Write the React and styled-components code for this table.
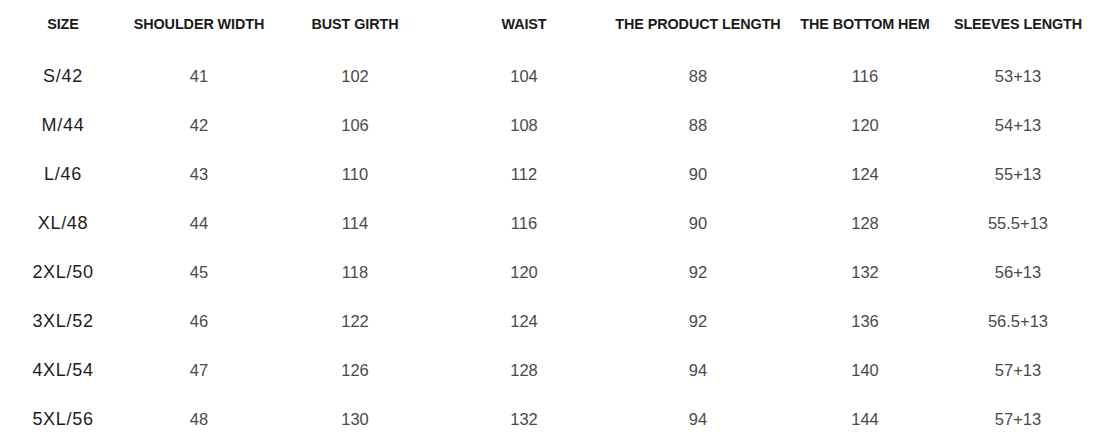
import React from "react";
import styled, { createGlobalStyle } from "styled-components";

const columns = [
  "SIZE",
  "SHOULDER WIDTH",
  "BUST GIRTH",
  "WAIST",
  "THE PRODUCT LENGTH",
  "THE BOTTOM HEM",
  "SLEEVES LENGTH",
];

const rows = [
  ["S/42", "41", "102", "104", "88", "116", "53+13"],
  ["M/44", "42", "106", "108", "88", "120", "54+13"],
  ["L/46", "43", "110", "112", "90", "124", "55+13"],
  ["XL/48", "44", "114", "116", "90", "128", "55.5+13"],
  ["2XL/50", "45", "118", "120", "92", "132", "56+13"],
  ["3XL/52", "46", "122", "124", "92", "136", "56.5+13"],
  ["4XL/54", "47", "126", "128", "94", "140", "57+13"],
  ["5XL/56", "48", "130", "132", "94", "144", "57+13"],
];

const App = () => {
  return (
    <>
      <GlobalStyle />
      <Chart>
        <HeadRow>
          {columns.map((c) => (
            <HeadCell key={c}>{c}</HeadCell>
          ))}
        </HeadRow>
        {rows.map((r) => (
          <Row key={r[0]}>
            {r.map((v, i) => (
              <Cell key={i} $size={i === 0}>
                {v}
              </Cell>
            ))}
          </Row>
        ))}
      </Chart>
    </>
  );
};

export default App;

const GlobalStyle = createGlobalStyle`
  body {
    margin: 0;
    background: #fff;
    font-family: "Liberation Sans", Arial, sans-serif;
  }
`;

const Chart = styled.div`
  width: 1095px;
  height: 441px;
  background: #fff;
  overflow: hidden;
`;

const grid = `
  display: grid;
  grid-template-columns: 126px 146px 166px 172px 176px 158px 148px;
  align-items: center;
  justify-items: center;
`;

const HeadRow = styled.div`
  ${grid}
  height: 52px;
  padding-bottom: 4px;
  box-sizing: border-box;
`;

const HeadCell = styled.div`
  font-size: 14.4px;
  font-weight: bold;
  letter-spacing: -0.1px;
  color: #1a1a1a;
  white-space: nowrap;
`;

const Row = styled.div`
  ${grid}
  height: 49px;
`;

const Cell = styled.div`
  font-size: ${(p) => (p.$size ? "18px" : "16.5px")};
  letter-spacing: ${(p) => (p.$size ? "0.7px" : "0")};
  color: ${(p) => (p.$size ? "#1e1e1e" : "#4a4a4a")};
  white-space: nowrap;
`;
